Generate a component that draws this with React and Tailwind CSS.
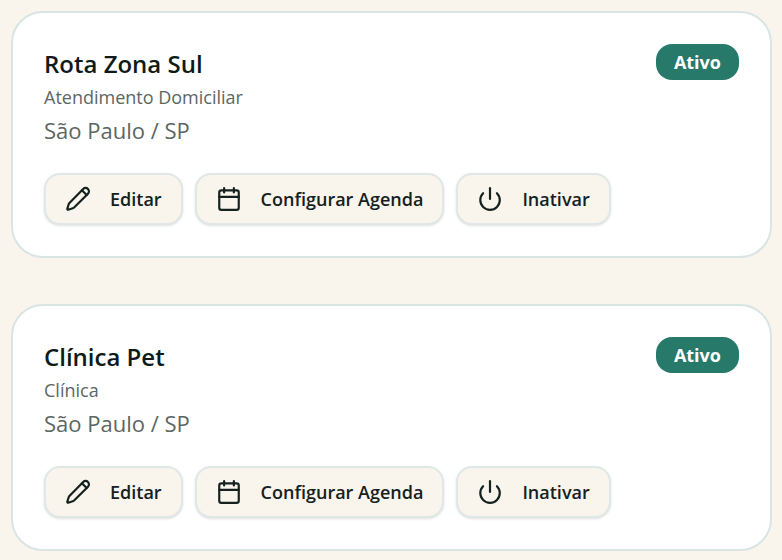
import React from "react";
import { Power } from "lucide-react";

const locations = [
  { id: 1, name: "Rota Zona Sul", type: "Atendimento Domiciliar", city: "São Paulo / SP" },
  { id: 2, name: "Clínica Pet", type: "Clínica", city: "São Paulo / SP" },
];

const iconProps = {
  width: 26,
  height: 26,
  viewBox: "0 0 24 24",
  fill: "none",
  stroke: "currentColor",
  strokeWidth: 2,
  strokeLinecap: "round",
  strokeLinejoin: "round",
  "aria-hidden": true,
};

const PencilIcon = () => (
  <svg {...iconProps}>
    <path d="M16.8 2.7a3.1 3.1 0 0 1 4.4 4.4L8.4 19.9a3 3 0 0 1-1.2.7L2.9 21.9a.7.7 0 0 1-.8-.8l1.3-4.3a3 3 0 0 1 .7-1.2Z" />
    <path d="m15.6 3.9 4.4 4.4" />
  </svg>
);

const CalendarIcon = () => (
  <svg {...iconProps}>
    <rect x="3" y="4" width="18" height="18" rx="2" />
    <path d="M7.5 2v4M16.5 2v4M3 10h18" />
  </svg>
);

const ActionButton = ({ icon, children }) => (
  <button
    type="button"
    className="flex h-[52px] items-center gap-[19px] rounded-2xl border-2 border-[#dfe8e6] bg-[#f9f4ec] px-[19px] text-lg font-semibold text-[#14211e] shadow-sm cursor-pointer"
  >
    {icon}
    {children}
  </button>
);

const LocationCard = ({ location }) => (
  <article className="rounded-[32px] border-2 border-[#d9e5e3] bg-white p-[31px]">
    <div className="flex items-start justify-between">
      <div>
        <h2 className="text-2xl leading-10 font-semibold text-[#0d1a17]">{location.name}</h2>
        <p className="text-lg leading-[26px] text-[#5b6664]">{location.type}</p>
        <p className="text-[22px] leading-10 text-[#5b6664]">{location.city}</p>
      </div>
      <span className="rounded-2xl bg-[#27796a] px-[18px] text-lg leading-9 font-bold text-white">
        Ativo
      </span>
    </div>

    {/* Actions */}
    <div className="mt-[23px] flex flex-wrap gap-3">
      <ActionButton icon={<PencilIcon />}>Editar</ActionButton>
      <ActionButton icon={<CalendarIcon />}>Configurar Agenda</ActionButton>
      <ActionButton icon={<Power size={26} aria-hidden="true" />}>Inativar</ActionButton>
    </div>
  </article>
);

const App = () => {
  return (
    <main className="flex min-h-screen flex-col gap-[46px] bg-[#f9f4ec] p-[11px] pr-[10px] font-['Open_Sans','Noto_Sans',sans-serif]">
      {locations.map((location) => (
        <LocationCard key={location.id} location={location} />
      ))}
    </main>
  );
};

export default App;
